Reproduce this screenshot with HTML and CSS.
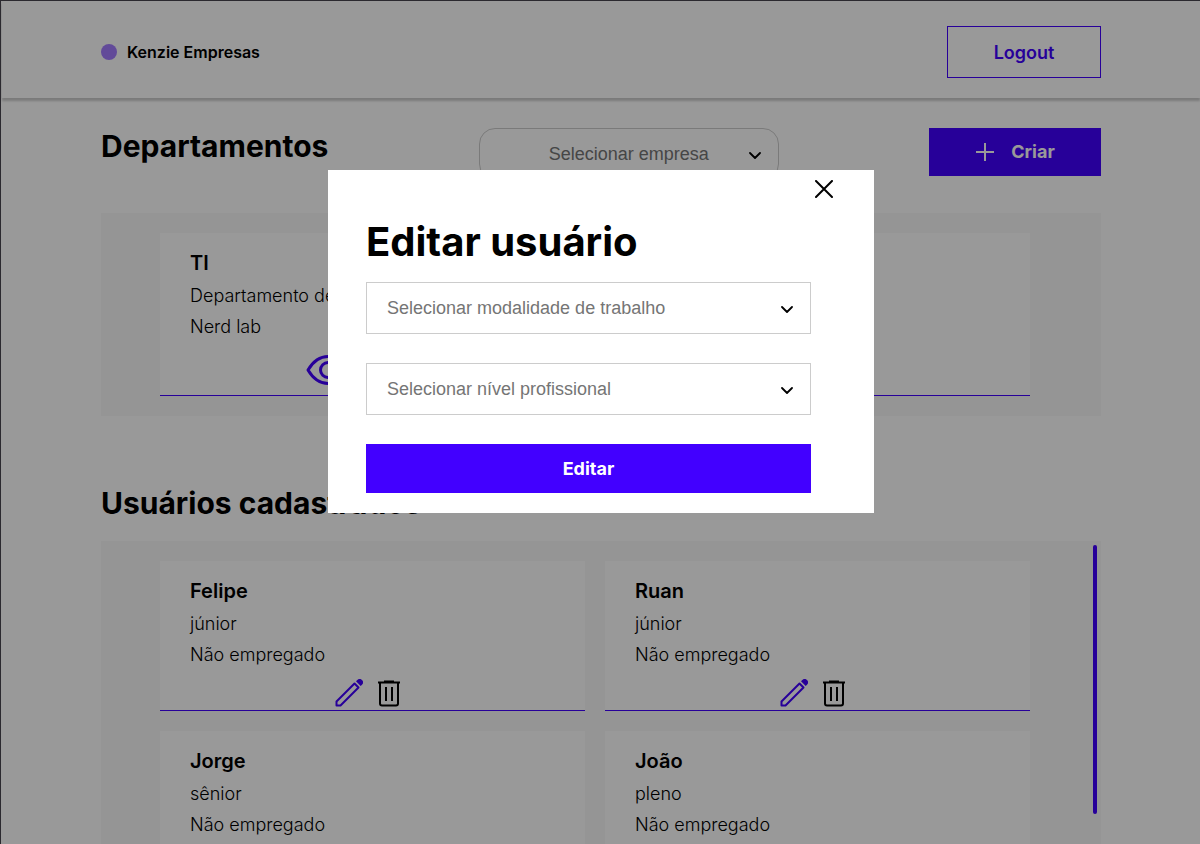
FILE: index.html
```html
<!DOCTYPE html>
<html lang="pt-BR">
<head>
<meta charset="utf-8">
<meta name="viewport" content="width=device-width, initial-scale=1">
<title>Kenzie Empresas</title>
<link rel="stylesheet" href="styles.css">
</head>
<body>
<svg class="sprite" aria-hidden="true">
  <symbol id="pencil" viewBox="0 0 28 28">
    <path d="M1.500 26.500V22.500L19.500 4.500l4 4L5.500 26.500Z" fill="none" stroke="currentColor" stroke-width="2" stroke-linejoin="round"/>
    <path d="M21 2.300L22.300 1a3.300 3.300 0 0 1 4.700 4.700L25.700 7Z" fill="currentColor"/>
  </symbol>
  <symbol id="trash" viewBox="0 0 24 28">
    <path d="M1 3.500h22M7 2.500h10M3 4v20.500a2 2 0 0 0 2 2h14a2 2 0 0 0 2-2V4M9 8v14M15 8v14" fill="none" stroke="currentColor" stroke-width="2"/>
  </symbol>
</svg>
<header class="header">
  <div class="container header-row">
    <div class="brand"><span class="brand-dot"></span>Kenzie Empresas</div>
    <button class="button button-outline" type="button">Logout</button>
  </div>
</header>
<main class="container">
  <section>
    <div class="toolbar">
      <h1 class="title">Departamentos</h1>
      <select class="select select-company" aria-label="Selecionar empresa"><option>Selecionar empresa</option></select>
      <button class="button button-create" type="button">
        <svg class="plus" viewBox="0 0 20 20" aria-hidden="true"><path d="M10 1v18M1 10h18" fill="none" stroke="currentColor" stroke-width="2"/></svg>
        Criar
      </button>
    </div>
    <ul class="panel">
      <li class="card">
        <h2 class="card-title">TI</h2>
        <p class="card-text">Departamento de TI</p>
        <p class="card-text">Nerd lab</p>
        <div class="actions actions-department">
          <button class="icon-button" type="button" aria-label="Visualizar">
            <svg class="icon-eye" viewBox="0 0 44 32" aria-hidden="true"><path d="M2 16Q10 2.500 22 2.500T42 16Q34 29.500 22 29.500T2 16Z" fill="none" stroke="currentColor" stroke-width="3" stroke-linejoin="round"/><circle cx="22" cy="16" r="7.500" fill="none" stroke="currentColor" stroke-width="3"/></svg>
          </button>
          <button class="icon-button icon-dark" type="button" aria-label="Editar"><svg class="icon-pencil" aria-hidden="true"><use href="#pencil"/></svg></button>
          <button class="icon-button icon-dark" type="button" aria-label="Excluir"><svg class="icon-trash" aria-hidden="true"><use href="#trash"/></svg></button>
        </div>
      </li>
    </ul>
  </section>
  <section>
    <h1 class="title title-users">Usuários cadastrados</h1>
    <div class="users">
      <ul class="panel panel-users">
        <li class="card">
          <h2 class="card-title">Felipe</h2>
          <p class="card-text">júnior</p>
          <p class="card-text">Não empregado</p>
          <div class="actions">
            <button class="icon-button" type="button" aria-label="Editar"><svg class="icon-pencil" aria-hidden="true"><use href="#pencil"/></svg></button>
            <button class="icon-button icon-dark" type="button" aria-label="Excluir"><svg class="icon-trash" aria-hidden="true"><use href="#trash"/></svg></button>
          </div>
        </li>
        <li class="card">
          <h2 class="card-title">Ruan</h2>
          <p class="card-text">júnior</p>
          <p class="card-text">Não empregado</p>
          <div class="actions">
            <button class="icon-button" type="button" aria-label="Editar"><svg class="icon-pencil" aria-hidden="true"><use href="#pencil"/></svg></button>
            <button class="icon-button icon-dark" type="button" aria-label="Excluir"><svg class="icon-trash" aria-hidden="true"><use href="#trash"/></svg></button>
          </div>
        </li>
        <li class="card">
          <h2 class="card-title">Jorge</h2>
          <p class="card-text">sênior</p>
          <p class="card-text">Não empregado</p>
          <div class="actions">
            <button class="icon-button" type="button" aria-label="Editar"><svg class="icon-pencil" aria-hidden="true"><use href="#pencil"/></svg></button>
            <button class="icon-button icon-dark" type="button" aria-label="Excluir"><svg class="icon-trash" aria-hidden="true"><use href="#trash"/></svg></button>
          </div>
        </li>
        <li class="card">
          <h2 class="card-title">João</h2>
          <p class="card-text">pleno</p>
          <p class="card-text">Não empregado</p>
          <div class="actions">
            <button class="icon-button" type="button" aria-label="Editar"><svg class="icon-pencil" aria-hidden="true"><use href="#pencil"/></svg></button>
            <button class="icon-button icon-dark" type="button" aria-label="Excluir"><svg class="icon-trash" aria-hidden="true"><use href="#trash"/></svg></button>
          </div>
        </li>
      </ul>
      <div class="scroll-track"><div class="scroll-thumb"></div></div>
    </div>
  </section>
</main>
<div class="overlay">
  <div class="modal" role="dialog" aria-modal="true" aria-labelledby="modal-title">
    <button class="close" type="button" aria-label="Fechar">
      <svg class="close-icon" viewBox="0 0 18 18" aria-hidden="true"><path d="M1 1l16 16M17 1L1 17" fill="none" stroke="currentColor" stroke-width="2" stroke-linecap="round"/></svg>
    </button>
    <form class="form">
      <h2 class="modal-title" id="modal-title">Editar usuário</h2>
      <select class="select" aria-label="Modalidade de trabalho"><option>Selecionar modalidade de trabalho</option></select>
      <select class="select" aria-label="Nível profissional"><option>Selecionar nível profissional</option></select>
      <button class="button button-edit" type="button">Editar</button>
    </form>
  </div>
</div>
</body>
</html>
```
FILE: styles.css
```css
:root {
  --brand: #4200ff;
  --panel: #f8f8f8;
  --line: #cccccc;
}

* {
  box-sizing: border-box;
  margin: 0;
  padding: 0;
}

body {
  height: 100vh;
  padding-left: 1px;
  overflow: hidden;
  border-top: 1px solid #49454f;
  border-left: 1px solid #49454f;
  background: #ffffff;
  color: #000000;
  font-family: Inter, "Liberation Sans", sans-serif;
}

button {
  font-family: inherit;
}

ul {
  list-style: none;
}

.sprite {
  position: absolute;
  width: 0;
  height: 0;
}

.container {
  width: min(1000px, 100% - 32px);
  margin: 0 auto;
}

.header {
  padding: 25px 0 20px;
  box-shadow: 0 3px 2px rgba(0, 0, 0, 0.2);
}

.header-row {
  display: flex;
  align-items: center;
  justify-content: space-between;
}

.brand {
  display: flex;
  align-items: center;
  gap: 10px;
  font-size: 16px;
  font-weight: 600;
}

.brand-dot {
  width: 16px;
  height: 16px;
  border-radius: 50%;
  background: #a37cff;
}

.button {
  border: 1px solid var(--brand);
  background: var(--brand);
  color: #ffffff;
  font-size: 18px;
  font-weight: 700;
  line-height: 22px;
}

.button-outline {
  width: 154px;
  padding: 15px 14px 13px;
  background: transparent;
  color: var(--brand);
  font-weight: 600;
}

.toolbar {
  display: flex;
  flex-wrap: wrap;
  align-items: flex-start;
  justify-content: space-between;
  padding-top: 30px;
}

.title {
  font-size: 30px;
  font-weight: 700;
  line-height: 36px;
}

.select {
  width: 100%;
  height: 52px;
  padding: 0 20px;
  appearance: none;
  border: 1px solid var(--line);
  border-radius: 0;
  background: #ffffff url("data:image/svg+xml,%3Csvg xmlns='http://www.w3.org/2000/svg' width='12' height='8'%3E%3Cpath d='M1 1l5 5 5-5' fill='none' stroke='black' stroke-width='1.8' stroke-linecap='round' stroke-linejoin='round'/%3E%3C/svg%3E") no-repeat right 17px top 23px;
  color: #757575;
  font-family: "Liberation Sans", Arial, sans-serif;
  font-size: 18px;
}

.select-company {
  width: 300px;
  border-radius: 16px;
  text-align: center;
  text-align-last: center;
}

.button-create {
  display: flex;
  align-items: center;
  justify-content: center;
  gap: 16px;
  width: 172px;
  padding: 12px;
}

.plus {
  width: 20px;
  height: 20px;
}

.panel {
  display: grid;
  gap: 20px;
  margin-top: 33px;
  padding: 20px 71px 20px 59px;
  background: var(--panel);
}

.card {
  padding: 16px 30px 0;
  border-bottom: 1px solid var(--brand);
  background: #ffffff;
}

.card-title {
  margin-bottom: 3px;
  font-size: 20px;
  font-weight: 600;
  line-height: 28px;
}

.card-text {
  font-size: 18px;
  font-weight: 300;
  line-height: 31px;
}

.actions {
  display: flex;
  align-items: center;
  justify-content: center;
  gap: 14px;
  width: min(355px, 100%);
  height: 40px;
  padding-top: 6px;
}

.actions-department {
  height: 53px;
  padding-top: 2px;
}

.icon-button {
  display: flex;
  border: 0;
  background: none;
  color: var(--brand);
}

.icon-dark {
  color: #000000;
}

.icon-pencil {
  width: 28px;
  height: 28px;
}

.icon-trash {
  width: 24px;
  height: 28px;
}

.icon-eye {
  width: 44px;
  height: 32px;
}

.title-users {
  margin-top: 69px;
}

.users {
  display: grid;
  margin-top: 20px;
}

.panel-users {
  grid-area: 1 / 1;
  grid-template-columns: 1fr 1fr;
  margin-top: 0;
}

.scroll-track {
  grid-area: 1 / 1;
  justify-self: end;
  padding: 4px;
}

.scroll-thumb {
  width: 4px;
  height: 269px;
  border-radius: 2px;
  background: var(--brand);
}

.overlay {
  position: fixed;
  inset: 0;
  display: flex;
  align-items: center;
  justify-content: center;
  padding: 0 0 161px 2px;
  background: rgba(0, 0, 0, 0.4);
}

.modal {
  width: min(546px, 100%);
  padding: 10px 63px 20px 38px;
  background: #ffffff;
}

.close {
  display: block;
  margin: 0 -22px 0 auto;
  border: 0;
  background: none;
}

.close-icon {
  display: block;
  width: 18px;
  height: 18px;
}

.form {
  display: grid;
  gap: 29px;
}

.modal-title {
  margin: 19px 0 -14px;
  font-size: 40px;
  font-weight: 700;
  line-height: 50px;
}

.button-edit {
  padding: 13px;
  line-height: 21px;
}
```
